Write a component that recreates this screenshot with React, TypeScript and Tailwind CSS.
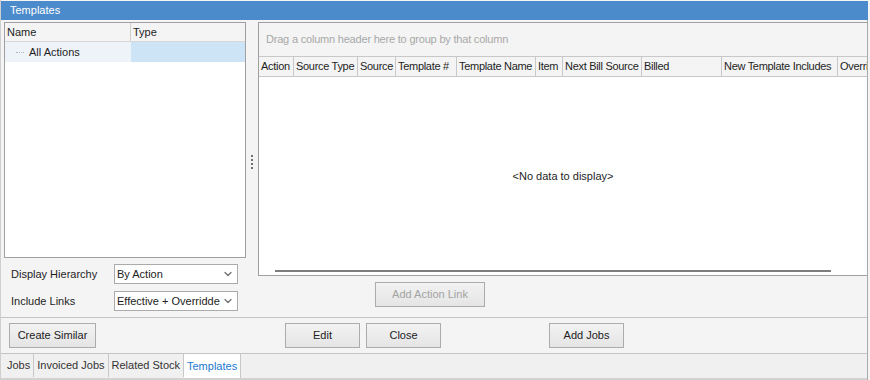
import { ChevronDown } from "lucide-react";

const columns = [
  { label: "Action", w: 35 },
  { label: "Source Type", w: 64 },
  { label: "Source", w: 38 },
  { label: "Template #", w: 61 },
  { label: "Template Name", w: 79 },
  { label: "Item", w: 27 },
  { label: "Next Bill Source", w: 79 },
  { label: "Billed", w: 80 },
  { label: "New Template Includes", w: 116 },
  { label: "Overrides", w: 60 },
];

const tabs = ["Jobs", "Invoiced Jobs", "Related Stock"];

function Btn({ label, w, disabled }: { label: string; w: number; disabled?: boolean }) {
  return (
    <button
      className={`h-[25px] border border-[#acacac] bg-gradient-to-b from-[#f2f2f2] to-[#e5e5e5] text-[11px] ${disabled ? "text-[#a3a3a3]" : "text-[#222]"}`}
      style={{ width: w }}
    >
      {label}
    </button>
  );
}

function Select({ value }: { value: string }) {
  return (
    <div className="w-[124px] h-[20px] bg-white border border-[#ababab] flex items-center pl-[2px] pr-[3px]">
      <span className="flex-1 overflow-hidden whitespace-nowrap text-[#222]">{value}</span>
      <ChevronDown size={12} strokeWidth={2.5} className="text-[#707070] ml-[2px] shrink-0" />
    </div>
  );
}

export default function App() {
  return (
    <div className="w-[870px] h-[380px] bg-[#f4f4f4] font-['Liberation_Sans',Arial,sans-serif] text-[11px] text-[#1e1e1e] flex flex-col border-l border-[#cfcfcf] overflow-hidden">
      {/* Title */}
      <div className="h-[19px] mt-[1px] mr-[2px] bg-[#4b8bcb] text-white pl-[9px] flex items-center leading-none">Templates</div>

      <div className="flex flex-col flex-1 border-r border-[#a9a9a9] mr-[2px]">
        {/* Main area */}
        <div className="flex h-[298px] border-b border-[#c4c4c4]">
          {/* Left */}
          <div className="w-[245px] pl-[3px] pt-[2px] flex flex-col">
            <div className="h-[236px] border border-[#a0a0a0] bg-white flex flex-col">
              <div className="flex h-[19px] bg-[#f4f4f4] border-b border-[#d8d8d8]">
                <div className="w-[126px] border-r border-[#cfcfcf] pl-[2px] flex items-center">Name</div>
                <div className="flex-1 pl-[2px] flex items-center">Type</div>
              </div>
              <div className="flex h-[20px]">
                <div className="w-[126px] bg-[#eef3fa] flex items-center pl-[11px]">
                  <span className="w-[8px] border-t border-dotted border-[#b8b8b8] mr-[5px]" />
                  All Actions
                </div>
                <div className="flex-1 bg-[#cde4f7]" />
              </div>
            </div>
            <div className="flex items-center mt-[6px] pl-[7px] h-[20px]">
              <span className="w-[103px]">Display Hierarchy</span>
              <Select value="By Action" />
            </div>
            <div className="flex items-center mt-[7px] pl-[7px] h-[20px]">
              <span className="w-[103px]">Include Links</span>
              <Select value="Effective + Overridden" />
            </div>
          </div>

          {/* Splitter */}
          <div className="w-[12px] flex flex-col items-center justify-center">
            <div className="flex flex-col gap-[2px] -mt-[14px]">
              <span className="w-[2px] h-[2px] bg-[#6f6f6f]" />
              <span className="w-[2px] h-[2px] bg-[#6f6f6f]" />
              <span className="w-[2px] h-[2px] bg-[#6f6f6f]" />
              <span className="w-[2px] h-[2px] bg-[#6f6f6f]" />
            </div>
          </div>

          {/* Right */}
          <div className="flex-1 pt-[2px] flex flex-col min-w-0">
            <div className="h-[254px] border border-r-0 border-[#a0a0a0] bg-white flex flex-col overflow-hidden">
              <div className="h-[34px] bg-[#f4f4f4] border-b border-[#c8c8c8] pl-[7px] flex items-center text-[#a8a8a8] tracking-[-0.2px]">
                Drag a column header here to group by that column
              </div>
              <div className="flex h-[20px] border-b border-[#c8c8c8] bg-[#f4f4f4] whitespace-nowrap tracking-[-0.3px]">
                {columns.map((c) => (
                  <div
                    key={c.label}
                    className="border-r border-[#c8c8c8] pl-[2px] flex items-center shrink-0 overflow-hidden"
                    style={{ width: c.w }}
                  >
                    {c.label}
                  </div>
                ))}
              </div>
              <div className="flex-1 flex items-center justify-center pt-[6px]">&lt;No data to display&gt;</div>
              <div className="h-[2px] bg-[#7d7d7d] ml-[16px] mr-[36px] mb-[3px]" />
            </div>
            <div className="flex justify-start pl-[117px] mt-[6px]">
              <Btn label="Add Action Link" w={110} disabled />
            </div>
          </div>
        </div>

        {/* Button bar */}
        <div className="h-[36px] flex items-center pl-[8px] border-b border-[#c4c4c4]">
          <Btn label="Create Similar" w={87} />
          <div className="ml-[189px] flex gap-[6px]">
            <Btn label="Edit" w={75} />
            <Btn label="Close" w={75} />
          </div>
          <div className="ml-[108px]">
            <Btn label="Add Jobs" w={75} />
          </div>
        </div>

        {/* Tabs */}
        <div className="flex-1 bg-[#f0f0f0] flex pl-[3px] border-b-2 border-[#d2d2d2]">
          {tabs.map((t) => (
            <div key={t} className="h-[23px] px-[3px] border-r border-[#c8c8c8] flex items-center text-[#333]">
              {t}
            </div>
          ))}
          <div className="h-[24px] px-[3px] bg-white border-r border-[#c8c8c8] flex items-center text-[#1a78d0]">Templates</div>
        </div>
      </div>
    </div>
  );
}
